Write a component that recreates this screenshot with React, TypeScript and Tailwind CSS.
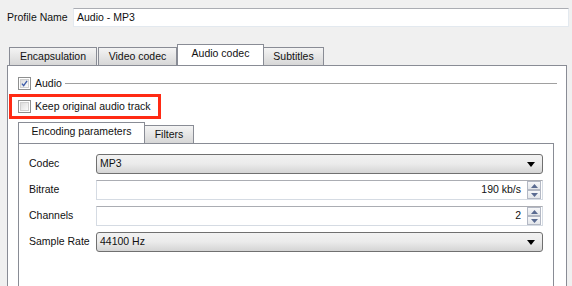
import React from 'react';

const Check: React.FC<{ checked?: boolean }> = ({ checked }) => (
  <div className="w-[13px] h-[13px] border border-[#8e8f8f] bg-white p-px shrink-0">
    <div className="w-full h-full bg-gradient-to-br from-[#dcdcdc] to-[#fbfbfb] border border-[#d0d0d0] flex items-center justify-center">
      {checked && (
        <svg width="9" height="9" viewBox="0 0 9 9">
          <path d="M1.2 4.6 L3.4 7.2 L7.8 1.2" fill="none" stroke="#3c5ba8" strokeWidth="1.7" />
        </svg>
      )}
    </div>
  </div>
);

const Tab: React.FC<{ label: string; active?: boolean; className?: string }> = ({ label, active, className }) =>
  active ? (
    <div className={`h-[21px] -mb-px relative z-10 border border-[#898c95] border-b-0 bg-white flex items-center justify-center pb-[2px] ${className}`}>
      {label}
    </div>
  ) : (
    <div className={`h-[18px] mt-[3px] border border-[#898c95] border-b-0 bg-gradient-to-b from-[#f4f4f4] to-[#d7d7d7] flex items-center justify-center ${className}`}>
      {label}
    </div>
  );

const Combo: React.FC<{ value: string }> = ({ value }) => (
  <div className="h-[20px] w-[447px] rounded-[3px] border border-[#707070] bg-gradient-to-b from-[#f2f2f2] via-[#ebebeb] to-[#d4d4d4] flex items-center pl-[3px] pr-[7px]">
    <span className="flex-1">{value}</span>
    <svg width="8" height="5" viewBox="0 0 8 5">
      <path d="M0 0 H8 L4 5 Z" fill="#000" />
    </svg>
  </div>
);

const Spin: React.FC<{ value: string }> = ({ value }) => (
  <div className="h-[20px] w-[447px] border border-[#d5dbe3] border-t-[#abadb3] bg-white flex items-center pr-px">
    <span className="flex-1 text-right pr-[6px]">{value}</span>
    <div className="flex flex-col w-[14px] h-[18px]">
      {[0, 1].map((i) => (
        <div key={i} className="flex-1 border border-[#b3b8c4] bg-gradient-to-b from-[#f6f7f9] to-[#e3e6ea] flex items-center justify-center">
          <svg width="7" height="4" viewBox="0 0 7 4">
            <path d={i === 0 ? 'M0 4 H7 L3.5 0 Z' : 'M0 0 H7 L3.5 4 Z'} fill="#5a6b91" />
          </svg>
        </div>
      ))}
    </div>
  </div>
);

const Row: React.FC<{ label: string; children: React.ReactNode }> = ({ label, children }) => (
  <div className="flex items-center h-[20px]">
    <div className="w-[67px]">{label}</div>
    {children}
  </div>
);

export default function App() {
  return (
    <div className="w-[572px] h-[286px] overflow-hidden bg-[#f0f0f0] text-[10.5px] text-[#111] font-['Liberation_Sans',Arial,sans-serif] pt-[8px]">
      <div className="flex items-center pl-[7px]">
        <div className="w-[66px]">Profile Name</div>
        <div className="h-[19px] w-[496px] border border-[#e3e9ef] border-t-[#abadb3] bg-white flex items-center pl-[3px]">
          Audio - MP3
        </div>
      </div>

      <div className="mt-[17px] ml-[7px] w-[560px]">
        <div className="flex pl-[2px]">
          <Tab label="Encapsulation" className="w-[88px]" />
          <Tab label="Video codec" className="w-[79px] ml-px" />
          <Tab label="Audio codec" active className="w-[87px]" />
          <Tab label="Subtitles" className="w-[61px] -ml-px" />
        </div>
        <div className="h-[230px] border border-[#898c95] bg-white pl-[10px] pt-[11px]">
          <div className="flex items-center h-[13px]">
            <Check checked />
            <span className="ml-[4px]">Audio</span>
            <div className="flex-1 h-px bg-[#a0a0a0] ml-[3px] mr-[9px]" />
          </div>

          <div className="relative flex items-center h-[13px] mt-[10px]">
            <Check />
            <span className="ml-[4px]">Keep original audio track</span>
            <div className="absolute left-[-9px] top-[-6px] w-[152px] h-[25px] border-[3px] border-[#ff2a14]" />
          </div>

          <div className="mt-[9px]">
            <div className="flex">
              <Tab label="Encoding parameters" active className="w-[127px]" />
              <Tab label="Filters" className="w-[50px] -ml-px" />
            </div>
            <div className="w-[536px] h-[160px] border border-[#898c95] bg-white pl-[10px] pt-[10px] flex flex-col gap-[6px]">
              <Row label="Codec">
                <Combo value="MP3" />
              </Row>
              <Row label="Bitrate">
                <Spin value="190 kb/s" />
              </Row>
              <Row label="Channels">
                <Spin value="2" />
              </Row>
              <Row label="Sample Rate">
                <Combo value="44100 Hz" />
              </Row>
            </div>
          </div>
        </div>
      </div>
    </div>
  );
}
